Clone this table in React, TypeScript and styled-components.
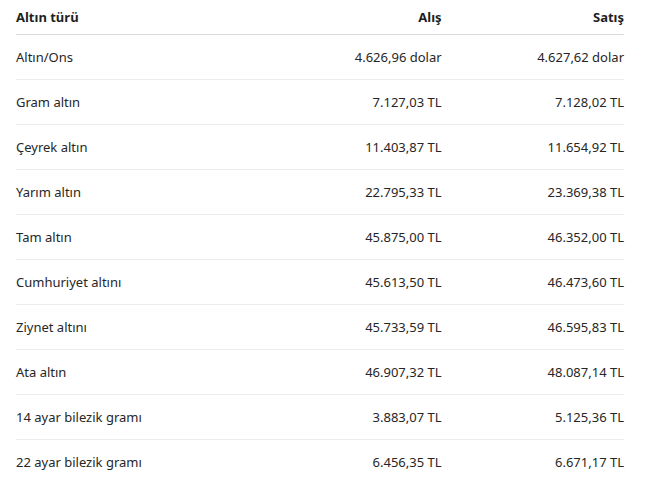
import React from "react";
import styled, { createGlobalStyle } from "styled-components";

const Global = createGlobalStyle`
  html, body { margin: 0; padding: 0; background: #ffffff; }
  body { font-family: "Noto Sans", "Open Sans", sans-serif; color: #242424; }
`;

const Wrap = styled.div`
  padding: 0 33px 0 16px;
`;

const Table = styled.table`
  width: 100%;
  border-collapse: collapse;
  table-layout: fixed;
  font-size: 13px;
`;

const HeadCell = styled.th<{ $align?: string; $w: string }>`
  width: ${(p) => p.$w};
  text-align: ${(p) => p.$align || "left"};
  font-weight: 700;
  height: 34px;
  padding: 0;
  border-bottom: 1px solid #d9d9d9;
  color: #1f1f1f;
`;

const Row = styled.tr`
  border-bottom: 1px solid #ececec;
  &:last-child { border-bottom: none; }
`;

const Cell = styled.td<{ $align?: string }>`
  text-align: ${(p) => p.$align || "left"};
  height: 44px;
  padding: 0;
  color: #262626;
`;

const rows: [string, string, string][] = [
  ["Altın/Ons", "4.626,96 dolar", "4.627,62 dolar"],
  ["Gram altın", "7.127,03 TL", "7.128,02 TL"],
  ["Çeyrek altın", "11.403,87 TL", "11.654,92 TL"],
  ["Yarım altın", "22.795,33 TL", "23.369,38 TL"],
  ["Tam altın", "45.875,00 TL", "46.352,00 TL"],
  ["Cumhuriyet altını", "45.613,50 TL", "46.473,60 TL"],
  ["Ziynet altını", "45.733,59 TL", "46.595,83 TL"],
  ["Ata altın", "46.907,32 TL", "48.087,14 TL"],
  ["14 ayar bilezik gramı", "3.883,07 TL", "5.125,36 TL"],
  ["22 ayar bilezik gramı", "6.456,35 TL", "6.671,17 TL"],
];

export default function App() {
  return (
    <>
      <Global />
      <Wrap>
        <Table>
          <thead>
            <tr>
              <HeadCell $w="40%">Altın türü</HeadCell>
              <HeadCell $w="30%" $align="right">Alış</HeadCell>
              <HeadCell $w="30%" $align="right">Satış</HeadCell>
            </tr>
          </thead>
          <tbody>
            {rows.map(([name, buy, sell]) => (
              <Row key={name}>
                <Cell>{name}</Cell>
                <Cell $align="right">{buy}</Cell>
                <Cell $align="right">{sell}</Cell>
              </Row>
            ))}
          </tbody>
        </Table>
      </Wrap>
    </>
  );
}
